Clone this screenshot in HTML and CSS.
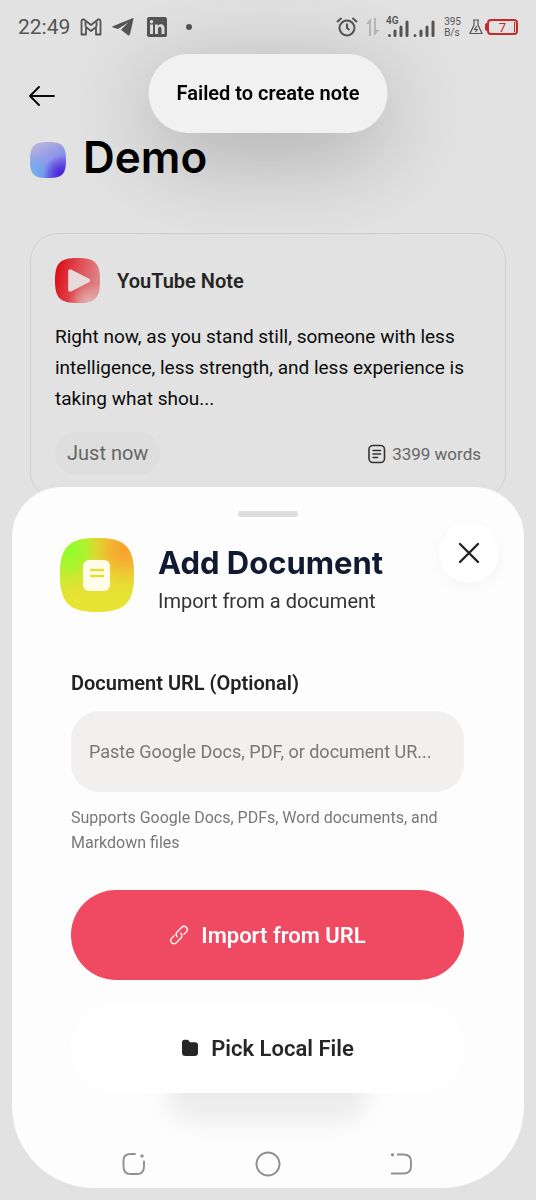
FILE: index.html
```html
<!DOCTYPE html>
<html lang="en">
<head>
<meta charset="utf-8">
<meta name="viewport" content="width=device-width, initial-scale=1">
<title>Demo</title>
<link rel="stylesheet" href="styles.css">
</head>
<body>
<div class="screen">
  <header class="status">
    <div class="status-left">
      <span class="clock">22:49</span>
      <svg width="22" height="18" viewBox="0 0 22 18" fill="none" stroke="currentColor" stroke-width="1.8" stroke-linejoin="round"><path d="M1.500 16.500V3.500Q1.500 1 4 1.500L11 7 18 1.500Q20.500 1 20.500 3.500V16.500H16V9L11 13 6 9V16.500Z"/><path d="M5.500 3.500v5M16.500 3.500v5"/></svg>
      <svg class="telegram" width="22" height="20" viewBox="0 0 22 20" fill="currentColor"><path d="M21 1 .8 9.200C0 9.600.2 10.300 1 10.500L6 12 16.500 5.200 9 12.700 16 18.200Q17.500 19 18 17.300L21.500 1.800Q21.600.8 21 1Z"/></svg>
      <svg class="linkedin" width="22" height="22" viewBox="0 0 22 22"><rect x="1" y="1" width="20" height="20" rx="2" fill="currentColor"/><g fill="#e0e0e0"><circle cx="5.500" cy="5.700" r="1.700"/><path d="M4 8.500h3V18H4zM9 8.500h2.800V10c1.600-2.600 6.700-2.400 6.700 2.200V18h-3v-5c0-3-3.500-2.700-3.500 0v5H9z"/></g></svg>
      <span class="dot"></span>
    </div>
    <div class="status-right">
      <svg width="22" height="22" viewBox="0 0 22 22" fill="none" stroke="currentColor" stroke-width="2"><circle cx="11" cy="12" r="7.500"/><path d="M11 7.500V12l2.500 2M1 6 5.500 2M21 6 16.500 2" /></svg>
      <svg class="faint" width="14" height="20" viewBox="0 0 14 20" fill="currentColor"><path d="M5 1v18H3V7H0zM8 1h2v12h3.500L8 19z"/></svg>
      <svg class="signal" width="50" height="24" viewBox="0 0 50 24" fill="none" stroke="currentColor" stroke-width="3" stroke-linecap="round"><path d="M3.500 20.500v0M9 16v4.500M15 12v8.500M21 7v13.500M29 20.500v0M35 16v4.500M41 12v8.500M47 7v13.500"/><text x="0" y="9" class="network">4G</text></svg>
      <span class="speed">395<br>B/s</span>
      <svg width="14" height="16" viewBox="0 0 14 16" fill="none" stroke="currentColor" stroke-width="1.200"><path d="M4 1h6M5 1v5L1 14.500h12L9 6V1"/><path d="M7.800 7 5.500 10.500h2.700L6.500 13"/></svg>
      <span class="battery">7</span>
    </div>
  </header>

  <main class="page">
    <button class="back" aria-label="Back"><svg width="28" height="22" viewBox="0 0 28 22" fill="none" stroke="currentColor" stroke-width="2" stroke-linecap="round" stroke-linejoin="round"><path d="M26 11H2M11 2 2 11l9 9"/></svg></button>
    <div class="heading">
      <svg width="36" height="36" viewBox="0 0 36 36">
        <defs>
          <linearGradient id="blue" x1=".2" y1="0" x2=".8" y2="1"><stop offset="0" stop-color="#b9b6dc"/><stop offset=".5" stop-color="#8f95e8"/><stop offset="1" stop-color="#6a5ae4"/></linearGradient>
          <radialGradient id="cyan" cx=".1" cy=".9" r=".6"><stop offset="0" stop-color="#6cb4ee"/><stop offset="1" stop-color="#6cb4ee" stop-opacity="0"/></radialGradient>
          <radialGradient id="violet" cx=".88" cy=".88" r=".5"><stop offset="0" stop-color="#4520d8"/><stop offset="1" stop-color="#4520d8" stop-opacity="0"/></radialGradient>
          <path id="squircle-s" d="M18 0C32 0 36 4 36 18S32 36 18 36 0 32 0 18 4 0 18 0Z"/>
        </defs>
        <use href="#squircle-s" fill="url(#blue)"/><use href="#squircle-s" fill="url(#cyan)"/><use href="#squircle-s" fill="url(#violet)"/>
      </svg>
      <h1>Demo</h1>
    </div>

    <article class="note">
      <div class="note-head">
        <svg width="45" height="45" viewBox="0 0 46 46">
          <defs>
            <linearGradient id="red" x1="0" y1=".4" x2="1" y2=".6"><stop offset="0" stop-color="#d90f18"/><stop offset=".45" stop-color="#df4a50"/><stop offset="1" stop-color="#dd8a8d"/></linearGradient>
            <radialGradient id="pale" cx=".75" cy="1" r=".45"><stop offset="0" stop-color="#e3b4b4"/><stop offset="1" stop-color="#e3b4b4" stop-opacity="0"/></radialGradient>
            <path id="squircle-m" d="M23 0C41 0 46 5 46 23S41 46 23 46 0 41 0 23 5 0 23 0Z"/>
          </defs>
          <use href="#squircle-m" fill="url(#red)"/><use href="#squircle-m" fill="url(#pale)"/>
          <path d="M15.500 13.500v19L34 23Z" fill="#e6dada" stroke="#e6dada" stroke-width="4" stroke-linejoin="round"/>
        </svg>
        <h2>YouTube Note</h2>
      </div>
      <p class="excerpt">Right now, as you stand still, someone with less intelligence, less strength, and less experience is taking what shou...</p>
      <div class="note-foot">
        <span class="when">Just now</span>
        <span class="words"><svg width="18" height="20" viewBox="0 0 18 20" fill="none" stroke="#333" stroke-width="1.600" stroke-linecap="round"><rect x="1" y="1.500" width="15.500" height="17" rx="4"/><path d="M5 6.500h7.500M5 10h7.500M5 13.500h4.500"/></svg>3399 words</span>
      </div>
    </article>
  </main>
</div>

<div class="toast" role="status">Failed to create note</div>

<section class="sheet" role="dialog" aria-labelledby="sheet-title">
  <div class="handle"></div>
  <div class="sheet-head">
    <svg class="sheet-icon" width="74" height="74" viewBox="0 0 74 74">
      <defs>
        <linearGradient id="yellow" x1="0" y1="0" x2="0" y2="1"><stop offset="0" stop-color="#e8d234"/><stop offset="1" stop-color="#e6e632"/></linearGradient>
        <radialGradient id="green" cx=".1" cy=".15" r=".65"><stop offset="0" stop-color="#8cff2c"/><stop offset=".4" stop-color="#a4f82c" stop-opacity=".85"/><stop offset="1" stop-color="#d8ea30" stop-opacity="0"/></radialGradient>
        <radialGradient id="orange" cx=".88" cy=".15" r=".55"><stop offset="0" stop-color="#fba030"/><stop offset=".4" stop-color="#f5ac32" stop-opacity=".8"/><stop offset="1" stop-color="#ecd032" stop-opacity="0"/></radialGradient>
        <path id="squircle-l" d="M37 0C65 0 74 9 74 37S65 74 37 74 0 65 0 37 9 0 37 0Z"/>
      </defs>
      <use href="#squircle-l" fill="url(#yellow)"/><use href="#squircle-l" fill="url(#green)"/><use href="#squircle-l" fill="url(#orange)"/>
      <rect x="23" y="22" width="27" height="31" rx="6" fill="#fffde8"/>
      <path d="M30 32h14M30 38h14" stroke="#e6de38" stroke-width="2.500"/>
    </svg>
    <div class="sheet-titles">
      <h2 id="sheet-title">Add Document</h2>
      <p>Import from a document</p>
    </div>
    <button class="close" aria-label="Close"><svg width="22" height="22" viewBox="0 0 22 22" fill="none" stroke="currentColor" stroke-width="2.400" stroke-linecap="round"><path d="m2 2 18 18M20 2 2 20"/></svg></button>
  </div>
  <form class="form" onsubmit="return false">
    <label for="url">Document URL (Optional)</label>
    <input id="url" type="url" placeholder="Paste Google Docs, PDF, or document UR...">
    <p class="hint">Supports Google Docs, PDFs, Word documents, and Markdown files</p>
    <button class="action primary" type="submit"><svg width="20" height="20" viewBox="0 0 20 20" fill="none" stroke="currentColor" stroke-width="1.300" stroke-linecap="round"><path d="M8.300 11.700c-1.600-1.600-1.600-3.300-.2-4.700l4.600-4.700c1.500-1.400 3.300-1.300 4.600 0s1.400 3.100 0 4.600L14.800 9.400M11.700 8.300c1.600 1.600 1.600 3.300.2 4.700l-4.600 4.700c-1.500 1.400-3.300 1.300-4.600 0s-1.400-3.100 0-4.600l2.500-2.500"/></svg>Import from URL</button>
    <button class="action secondary" type="button"><svg width="18" height="18" viewBox="0 0 18 18" fill="currentColor"><path d="M1 3.500C1 1.800 2 .8 3.500.8h2.300c1 0 1.700.4 2.300 1.200l.9 1.200h5C16 3.200 17 4.500 17 6v7.500C17 16 16 17 13.500 17h-9C2 17 1 16 1 13.500Z"/></svg>Pick Local File</button>
  </form>
</section>

<nav class="sysnav">
  <button aria-label="Recent apps"><svg width="26" height="26" viewBox="0 0 26 26" fill="none" stroke="currentColor" stroke-width="1.900" stroke-linecap="round"><path d="M14 3H9.500Q2.500 3 2.500 9.500v6Q2.500 23 9.500 23h6.500Q23 23 23 15.500V10.500"/><circle cx="21" cy="5" r="1.200" fill="currentColor" stroke-width="1"/></svg></button>
  <button aria-label="Home"><svg width="26" height="26" viewBox="0 0 26 26" fill="none" stroke="currentColor" stroke-width="1.900"><circle cx="13" cy="13" r="11.500"/></svg></button>
  <button aria-label="Back"><svg width="26" height="26" viewBox="0 0 26 26" fill="none" stroke="currentColor" stroke-width="1.900"><path d="M8 3.500h6.500Q22 3.500 22 10.500V15Q22 22.500 14.500 22.500H2"/><circle cx="3.500" cy="3.800" r="1.200" fill="currentColor" stroke-width="1"/></svg></button>
</nav>
</body>
</html>
```
FILE: styles.css
```css
* { box-sizing: border-box; }

body {
  margin: 0;
  min-height: 100vh;
  background: #e2e2e2;
  color: #0b0b0b;
  font-family: Roboto, "Liberation Sans", sans-serif;
}

h1, h2, p { margin: 0; }
svg { flex: none; display: block; }

button {
  display: flex;
  align-items: center;
  justify-content: center;
  padding: 0;
  border: 0;
  background: none;
  color: inherit;
  font: inherit;
  cursor: pointer;
}

.status {
  display: flex;
  justify-content: space-between;
  align-items: center;
  height: 54px;
  padding: 0 18px;
  color: #555;
}
.status-left, .status-right { display: flex; align-items: center; }
.status-left { gap: 10px; }
.status-right { gap: 8px; }
.clock { font-size: 21px; }
.linkedin { margin-left: 2px; }
.dot { width: 6px; height: 6px; margin-left: 8px; border-radius: 50%; background: currentColor; }
.faint { margin-right: -2px; color: #b9b9b9; }
.network { font-size: 10px; font-weight: 600; fill: currentColor; stroke: none; }
.speed { font-size: 10px; line-height: 11px; }
.battery {
  position: relative;
  display: flex;
  align-items: center;
  justify-content: center;
  width: 31px;
  height: 16px;
  margin-left: -4px;
  border: 2px solid #c42a2a;
  border-radius: 4px;
  color: #c42a2a;
  font-size: 13px;
}
.battery::before,
.battery::after { content: ""; position: absolute; background: #c42a2a; }
.battery::before { left: -4px; top: 2px; width: 2px; height: 8px; border-radius: 2px 0 0 2px; }
.battery::after { right: 1px; top: 1px; width: 1px; height: 10px; }

.page { padding: 0 30px; }
.back { width: 28px; height: 40px; margin: 22px 0 17px -2px; }
.heading { display: flex; align-items: center; gap: 17px; height: 54px; }
.heading h1 { padding-bottom: 6px; font: 600 44px/48px Inter, sans-serif; color: #000; }

.note {
  margin-top: 46px;
  padding: 24px;
  border: 1px solid #cfcfcf;
  border-radius: 28px;
}
.note-head { display: flex; align-items: center; gap: 17px; }
.note-head h2 { font-size: 20px; font-weight: 600; color: #262626; }
.excerpt { margin-top: 18px; font-size: 19px; line-height: 31px; }
.note-foot { display: flex; justify-content: space-between; align-items: center; margin-top: 18px; }
.when {
  padding: 0 12px;
  border-radius: 22px;
  background: #dedede;
  color: #666;
  font-size: 20px;
  line-height: 43px;
}
.words { display: flex; align-items: center; gap: 6px; color: #666; font-size: 17px; }

.toast {
  position: fixed;
  top: 54px;
  left: 50%;
  transform: translateX(-50%);
  padding: 0 28px;
  border-radius: 40px;
  background: #f1f1f1;
  box-shadow: 0 20px 90px rgba(0, 0, 0, .26);
  color: #000;
  font-size: 20px;
  font-weight: 600;
  line-height: 79px;
  white-space: nowrap;
}

.sheet {
  position: fixed;
  left: 12px;
  right: 12px;
  bottom: 12px;
  padding: 24px 24px 95px;
  border-radius: 50px 50px 82px 82px;
  background: #fdfdfd;
}
.handle { width: 60px; height: 6px; margin: 0 auto; border-radius: 3px; background: #dedede; }
.sheet-head { display: flex; align-items: flex-start; gap: 24px; padding: 6px 1px 0 24px; }
.sheet-icon { margin-top: 15px; }
.sheet-titles { flex: 1; margin-top: 20px; }
.sheet-titles h2 { font: 700 31px/40px Inter, sans-serif; color: #101a30; white-space: nowrap; }
.sheet-titles p { font-size: 20px; line-height: 36px; color: #333; }
.close {
  width: 60px;
  height: 60px;
  margin-left: -24px;
  border-radius: 50%;
  background: #fff;
  box-shadow: 0 4px 16px rgba(0, 0, 0, .04);
  color: #222;
}

.form {
  display: flex;
  flex-direction: column;
  padding: 47px 36px 0 35px;
  isolation: isolate;
}
.form label { font-size: 20px; font-weight: 600; line-height: 34px; color: #222; }
.form input {
  width: 100%;
  height: 81px;
  margin-top: 11px;
  padding: 0 17px;
  border: 1px solid #f1f3f6;
  border-radius: 28px;
  background: #f1f0ef;
  font: 18px Roboto, sans-serif;
  color: #222;
}
.form input::placeholder { color: #777; opacity: 1; }
.hint { margin-top: 13px; font-size: 16px; line-height: 25px; color: #777; }
.action {
  gap: 12px;
  height: 90px;
  border-radius: 45px;
  font-size: 22px;
  font-weight: 600;
}
.primary { margin-top: 35px; background: #f04a62; color: #fff; }
.secondary {
  position: relative;
  margin-top: 23px;
  background: #fff;
  color: #262626;
}
.secondary::after {
  content: "";
  position: absolute;
  z-index: -1;
  left: 96px;
  right: 96px;
  bottom: -28px;
  height: 56px;
  border-radius: 28px;
  background: rgba(0, 0, 0, .07);
  filter: blur(12px);
}

.sysnav {
  position: fixed;
  left: 0;
  right: 0;
  bottom: 16px;
  display: flex;
  justify-content: center;
  gap: 108px;
  color: #909090;
}
.sysnav button { height: 40px; }
```
